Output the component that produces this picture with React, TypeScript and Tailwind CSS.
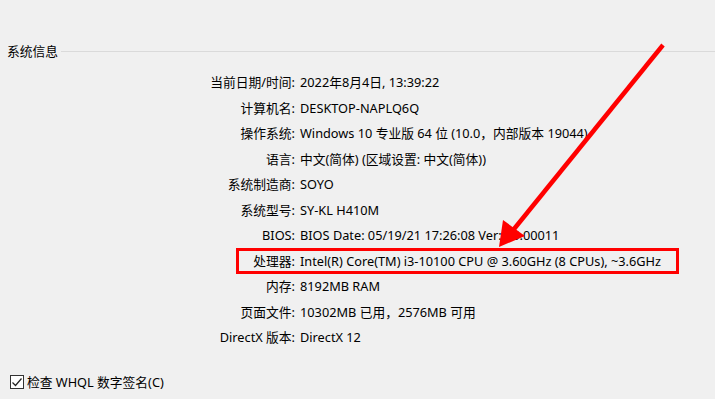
const rows: [string, string][] = [
  ["当前日期/时间:", "2022年8月4日, 13:39:22"],
  ["计算机名:", "DESKTOP-NAPLQ6Q"],
  ["操作系统:", "Windows 10 专业版 64 位 (10.0，内部版本 19044)"],
  ["语言:", "中文(简体) (区域设置: 中文(简体))"],
  ["系统制造商:", "SOYO"],
  ["系统型号:", "SY-KL H410M"],
  ["BIOS:", "BIOS Date: 05/19/21 17:26:08 Ver: 05.00011"],
  ["处理器:", "Intel(R) Core(TM) i3-10100 CPU @ 3.60GHz (8 CPUs), ~3.6GHz"],
  ["内存:", "8192MB RAM"],
  ["页面文件:", "10302MB 已用，2576MB 可用"],
  ["DirectX 版本:", "DirectX 12"],
];

const Arrow = () => (
  <svg className="pointer-events-none absolute left-0 top-0" width="715" height="399">
    <line x1="663" y1="45" x2="510" y2="234" stroke="#ff0000" strokeWidth="4.5" />
    <polygon points="499,247 503,220 525,236" fill="#ff0000" />
  </svg>
);

const Row = (props: { label: string; value: string; boxed?: boolean }) => (
  <div className="relative flex h-[25.5px] items-center">
    <div className="w-[299px] shrink-0 pr-[4px] text-right">{props.label}</div>
    <div className="whitespace-nowrap pl-[1px]">{props.value}</div>
    {props.boxed ? (
      <div className="absolute left-[236px] top-[-1px] h-[26px] w-[443px] border-[3px] border-[#ff0000]" />
    ) : null}
  </div>
);

export default function App() {
  return (
    <div
      className="relative h-[399px] w-[715px] overflow-hidden bg-[#f0f0f0] text-[12.75px] text-black"
      style={{ fontFamily: '"Noto Sans", "Noto Sans CJK SC", sans-serif' }}
    >
      <div className="flex items-center pt-[41px]">
        <div className="pl-[7px] pr-[3px] leading-[20px]">系统信息</div>
        <div className="h-px flex-1 bg-[#dadada]" />
      </div>
      <div className="flex flex-col pt-[9px]">
        {rows.map(([label, value]) => (
          <Row key={label} label={label} value={value} boxed={label === "处理器:"} />
        ))}
      </div>
      <div className="flex items-center gap-[3px] pl-[10px] pt-[22px]">
        <div className="flex h-[14px] w-[14px] items-center justify-center border border-[#333] bg-white">
          <svg width="12" height="12" viewBox="0 0 12 12">
            <path d="M1.5 6.5 L4.5 9.5 L10.5 2.5" fill="none" stroke="#222" strokeWidth="1.2" />
          </svg>
        </div>
        <div>检查 WHQL 数字签名(C)</div>
      </div>
      <Arrow />
    </div>
  );
}
